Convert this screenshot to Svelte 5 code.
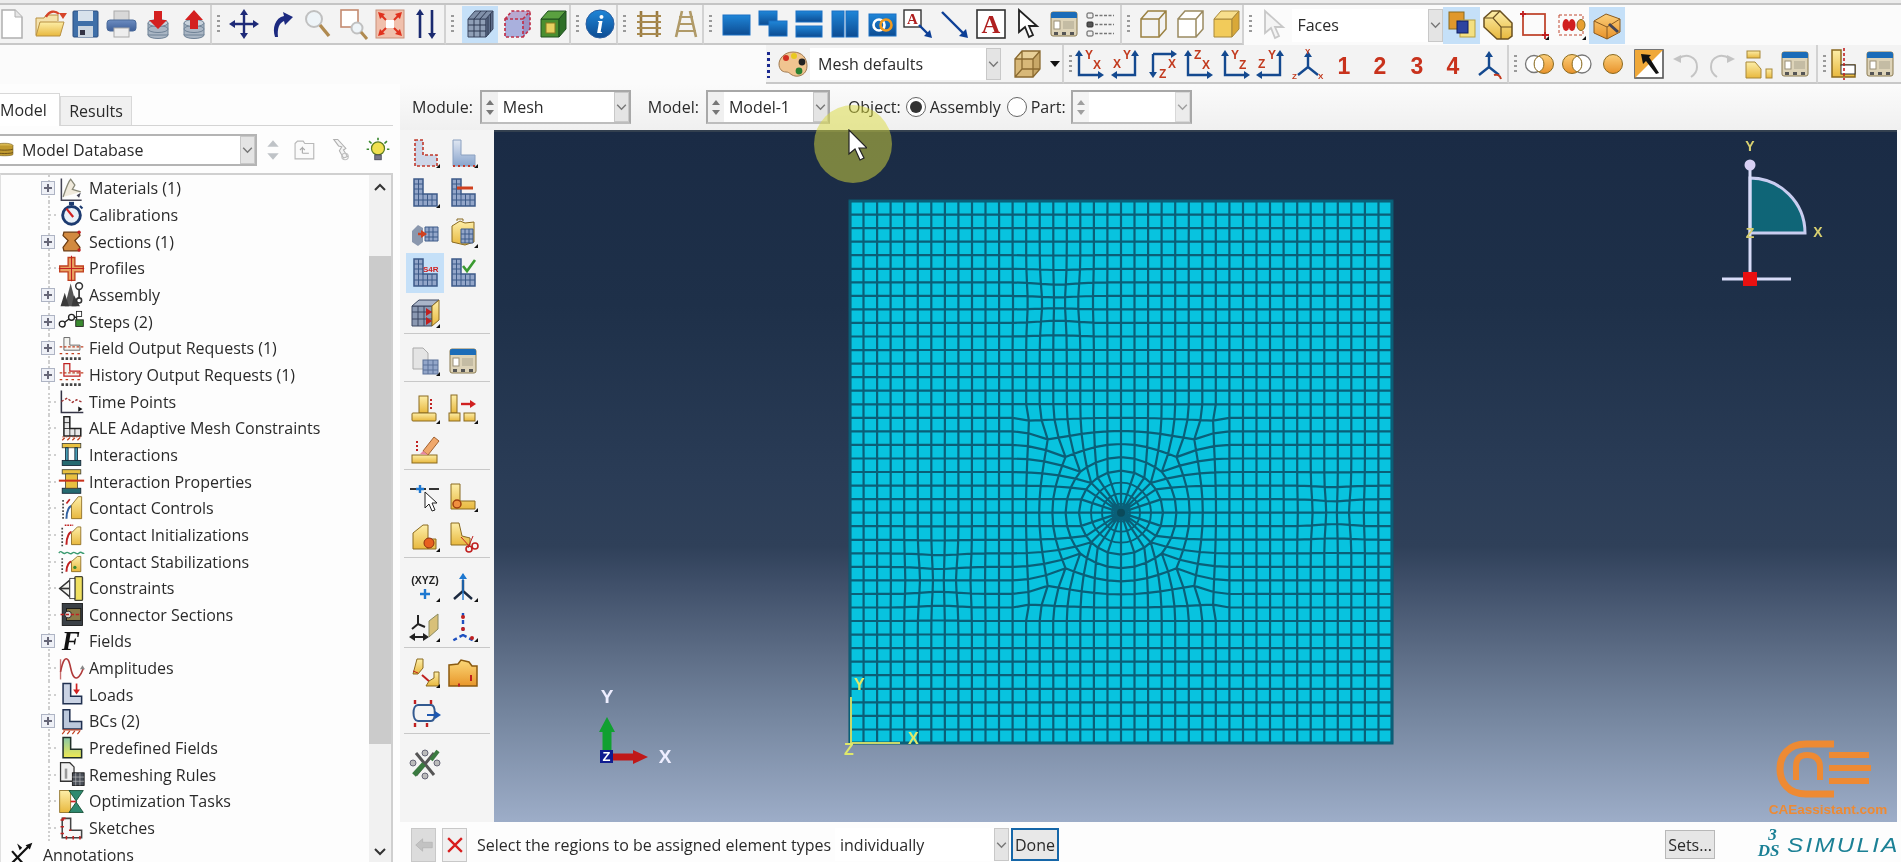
<script>
  const N = 40, x0 = 850, y0 = 201, h = 13.55, ic0 = 20, jc0 = 23;
  const cx = x0 + ic0 * h, cy = y0 + jc0 * h;
  const spots = [[1057, 303, 18, 0.22], [940, 580, 18, 0.22], [1334, 512, 16, 0.24]];
  const R = (k) => (k <= 3 ? 14 * k : 42 + (k - 3) * 13.55);
  const sm = (t) => { t = Math.max(0, Math.min(1, t)); return t * t * (3 - 2 * t); };
  function P(i, j) {
    const dx = i - ic0, dy = j - jc0, k = Math.max(Math.abs(dx), Math.abs(dy));
    let x = x0 + i * h, y = y0 + j * h;
    if (k > 0) {
      const n = Math.hypot(dx, dy), w = 1 - sm((k - 3) / 5);
      x += (cx + (dx / n) * R(k) - x) * w;
      y += (cy + (dy / n) * R(k) - y) * w;
    }
    if (i > 0 && i < N && j > 0 && j < N) {
      for (const [sx, sy, s, a] of spots) {
        const d = Math.hypot(x - sx, y - sy), g = Math.exp(-(d * d) / (2 * s * s));
        x += (sx - x) * a * g; y += (sy - y) * a * g;
      }
    }
    return [x.toFixed(1), y.toFixed(1)];
  }
  function meshPath() {
    let d = '';
    const inner = (i, j) => Math.max(Math.abs(i - ic0), Math.abs(j - jc0)) < 3;
    for (let j = 0; j <= N; j++) for (let i = 0; i < N; i++) {
      if (inner(i, j) || inner(i + 1, j)) continue;
      const a = P(i, j), b = P(i + 1, j);
      d += `M${a[0]} ${a[1]}L${b[0]} ${b[1]}`;
    }
    for (let i = 0; i <= N; i++) for (let j = 0; j < N; j++) {
      if (inner(i, j) || inner(i, j + 1)) continue;
      const a = P(i, j), b = P(i, j + 1);
      d += `M${a[0]} ${a[1]}L${b[0]} ${b[1]}`;
    }
    for (let dy = -3; dy <= 3; dy++) for (let dx = -3; dx <= 3; dx++) {
      if (Math.max(Math.abs(dx), Math.abs(dy)) !== 3) continue;
      const a = P(ic0 + dx, jc0 + dy);
      d += `M${cx} ${cy}L${a[0]} ${a[1]}`;
    }
    return d;
  }
  const mesh = meshPath();
  const rings = [9, 19, 30];

  const cube = (a, b, c, s = '#7a5c20') => `<path d="M4 11h18v18H4z" fill="${a}" stroke="${s}"/><path d="M4 11l7-8h18l-7 8z" fill="${b}" stroke="${s}"/><path d="M22 11l7-8v18l-7 8z" fill="${c}" stroke="${s}"/>`;
  const wire = (s) => `<path d="M4 11h18v18H4zM4 11l7-8h18v18l-7 8M22 11l7-8" fill="none" stroke="${s}" stroke-width="1.5"/>`;
  const fl = `<path d="M27 31l4-4v4z" fill="#111"/>`;
  const L = `M5 2h9v15h14v12H5z`;
  const lmesh = (f = '#93a6c9', s = '#3d5a88') => `<path d="${L}" fill="${f}" stroke="${s}" stroke-width="1.5"/><path d="M9.5 2v27M14 17v12M18.5 17v12M23 17v12M5 7h9M5 12h9M5 17h9M5 23h23" stroke="${s}" stroke-width="1"/>`;
  const lgold = (s = '#8a6a20') => `<path d="${L}" fill="url(#gGold)" stroke="${s}" stroke-width="1.5"/>`;
  const head = (x, y, d, c) => {
    const m = { u: `M${x} ${y}l-4 6h8z`, d: `M${x} ${y}l-4 -6h8z`, r: `M${x} ${y}l-6 -4v8z`, l: `M${x} ${y}l6 -4v8z` };
    return `<path d="${m[d]}" fill="${c}"/>`;
  };
  const t = (x, y, s, c = '#c23a1e', z = 12, w = 700, extra = '') => `<text x="${x}" y="${y}" font-family="Liberation Sans" font-size="${z}" font-weight="${w}" fill="${c}" ${extra}>${s}</text>`;
  const B = '#14498f';
  const ax1 = (v, hh) => `<path d="M6 8v19h20" fill="none" stroke="${B}" stroke-width="2.4"/>` + head(6, 2, 'u', B) + head(31, 27, 'r', B) + t(12, 11, v) + t(20, 21, hh);
  const ax2 = (hh, v) => `<path d="M25 8v19H6" fill="none" stroke="${B}" stroke-width="2.4"/>` + head(25, 2, 'u', B) + head(1, 27, 'l', B) + t(3, 20, hh) + t(13, 11, v);
  const ax3 = `<path d="M7 6h19M7 6v18" fill="none" stroke="${B}" stroke-width="2.4"/>` + head(31, 6, 'r', B) + head(7, 30, 'd', B) + t(22, 20, 'X') + t(13, 30, 'Z');
  const iso = (lab) => `<path d="M16 8v11M16 19l-10 8M16 19l10 8" stroke="${B}" stroke-width="2.4"/>` + head(16, 3, 'u', B) + (lab ? t(13, 6, 'Y', '#c23a1e', 8) + t(0, 31, 'Z', '#c23a1e', 8) + t(26, 31, 'X', '#c23a1e', 8) : `<path d="M21 27c3-1 6 0 7 4" fill="none" stroke="#c23a1e" stroke-width="2"/>`);
  const db = `<g fill="#aab6c4" stroke="#6f8296"><ellipse cx="16" cy="27" rx="10" ry="3.5"/><path d="M6 15v12h20V15" /><ellipse cx="16" cy="21" rx="10" ry="3.5"/><ellipse cx="16" cy="15" rx="10" ry="3.5" fill="#c8d2dc"/></g>`;
  const viewBase = (x, y, w, hh) => `<rect x="${x}" y="${y}" width="${w}" height="${hh}" fill="url(#gBlue)" stroke="#1b70c4"/>`;
  const win = `<rect x="3" y="4" width="26" height="24" rx="2" fill="#ddd3b8" stroke="#8a7a50"/><path d="M3 6q0-2 2-2h22q2 0 2 2v4H3z" fill="#1b6cb8"/><rect x="6" y="13" width="6" height="8" fill="#fff" stroke="#9a9078"/><rect x="15" y="13" width="11" height="8" fill="#c4bca4"/><rect x="6" y="24" width="4" height="3" fill="#555"/><rect x="14" y="24" width="4" height="3" fill="#555"/><rect x="22" y="24" width="4" height="3" fill="#555"/>`;

  const ic = {
    new: `<path d="M6 2h13l7 7v21H6z" fill="#fff" stroke="#b0b0b0" stroke-width="1.5"/><path d="M19 2v7h7" fill="#e6e6e6" stroke="#b0b0b0"/>`,
    open: `<path d="M3 27V10h8l2-3h12v6" fill="#f4e2ac" stroke="#b89040"/><path d="M3 28l4-14h24l-4 14z" fill="url(#gGold)" stroke="#b89040"/><path d="M13 9c3-6 9-7 13-3" fill="none" stroke="#d6442a" stroke-width="2.4"/>` + head(30, 11, 'd', '#d6442a'),
    save: `<rect x="4" y="3" width="25" height="26" rx="1" fill="#3f6fa8" stroke="#2a4f80"/><rect x="9" y="3" width="15" height="10" fill="#d8e2ec"/><rect x="9" y="18" width="15" height="11" fill="#ccd6e0"/><rect x="11" y="22" width="5" height="5" fill="#334"/>`,
    print: `<rect x="9" y="3" width="15" height="10" fill="#d8d8d8" stroke="#aaa"/><rect x="2" y="12" width="29" height="11" rx="3" fill="url(#gBlue2)" stroke="#4a6a9a"/><rect x="9" y="20" width="15" height="9" fill="#eee" stroke="#aaa"/>`,
    dbdown: db + `<path d="M12 3h8v9h5l-9 9-9-9h5z" fill="#d42020"/>`,
    dbup: db + `<path d="M12 21h8v-9h5l-9-10-9 10h5z" fill="#d42020"/>`,
    move: `<path d="M16 5v22M5 16h22" stroke="#1e2a78" stroke-width="2.4"/>` + head(16, 1, 'u', '#1e2a78') + head(16, 31, 'd', '#1e2a78') + head(1, 16, 'l', '#1e2a78') + head(31, 16, 'r', '#1e2a78'),
    rotate: `<path d="M10 29C7 20 10 10 19 8l-1-4 10 5-8 8-1-4c-5 2-7 8-6 16z" fill="#1c2a80"/>`,
    zoom: `<circle cx="13" cy="11" r="8" fill="#eef4f8" stroke="#c0c0c0" stroke-width="2"/><path d="M19 17l9 11" stroke="#b08a50" stroke-width="3.4"/>`,
    boxzoom: `<rect x="4" y="2" width="17" height="17" fill="#fff" stroke="#c48a70" stroke-width="1.6"/><circle cx="20" cy="20" r="5.5" fill="#eef4f8" stroke="#c0c0c0" stroke-width="2"/><path d="M24 24l6 7" stroke="#b08a50" stroke-width="3"/>`,
    fit: `<rect x="2" y="2" width="28" height="28" fill="#f0c0ac" stroke="#c8907a"/><path d="M12 12h8v8h-8z" fill="#fff"/><path d="M4 4l7 2-5 5zM28 4l-2 7-5-5zM4 28l2-7 5 5zM28 28l-7-2 5-5z" fill="#e0321e"/><path d="M6 6l6 6M26 6l-6 6M6 26l6-6M26 26l-6-6" stroke="#e0321e" stroke-width="2"/>`,
    updown: `<path d="M10 7v23M22 2v23" stroke="#1a2a70" stroke-width="2.6"/>` + head(10, 1, 'u', '#1a2a70') + head(22, 31, 'd', '#1a2a70'),
    meshc: `<path d="M4 11h18v18H4z" fill="#8f9fb6" stroke="#3a4660"/><path d="M4 11l7-8h18l-7 8z" fill="#7f8fa8" stroke="#3a4660"/><path d="M22 11l7-8v18l-7 8z" fill="#5e6e8a" stroke="#3a4660"/><path d="M10 11v18M16 11v18M4 17h18M4 23h18M10 11l7-8M16 11l7-8M24 9v18M26.500 6v18" stroke="#2f3a52"/>`,
    dashc: `<path d="M4 11h18v18H4z" fill="#a9b0dd"/><path d="M4 11l7-8h18l-7 8z" fill="#b8a8d0"/><path d="M22 11l7-8v18l-7 8z" fill="#9a92c4"/><path d="M4 11h18v18H4zM4 11l7-8h18v18l-7 8M22 11l7-8" fill="none" stroke="#c0304a" stroke-width="1.7" stroke-dasharray="3 2"/>`,
    greenc: cube('#4a8f30', '#5aa040', '#2f6f28', '#1f4f1f') + `<rect x="9" y="15" width="9" height="10" fill="#e8d060" stroke="#8a7a20"/>`,
    info: `<circle cx="16" cy="16" r="14" fill="url(#gBlue)" stroke="#2a5ea0"/><text x="16" y="25" text-anchor="middle" font-family="Liberation Serif" font-style="italic" font-weight="700" font-size="25" fill="#fff">i</text>`,
    ladder: `<path d="M8 3v26M24 3v26" stroke="#9a7a40" stroke-width="2.6"/><path d="M4 8h24M4 14h24M4 20h24M4 26h24" stroke="#a88a50" stroke-width="2.2"/>`,
    ladder2: `<path d="M12 3L6 29M20 3l6 26" stroke="#b09a68" stroke-width="2.6"/><path d="M9 9h14M8 16h16M6 23h20" stroke="#b09a68" stroke-width="2.2"/>`,
    v1: viewBase(3, 7, 27, 20),
    v2: viewBase(2, 3, 18, 14) + viewBase(12, 13, 18, 15),
    v3: viewBase(3, 3, 26, 11) + viewBase(3, 18, 26, 11),
    v4: viewBase(3, 3, 12, 26) + viewBase(17, 3, 12, 26),
    link: viewBase(3, 6, 27, 22) + `<circle cx="13" cy="17" r="5.500" fill="none" stroke="#fff" stroke-width="2.600"/><circle cx="20" cy="17" r="5.500" fill="none" stroke="#f09a20" stroke-width="2.600"/>`,
    ann1: `<rect x="2" y="2" width="17" height="17" fill="#fff" stroke="#333" stroke-width="1.400"/><text x="10.500" y="16" text-anchor="middle" font-family="Liberation Serif" font-size="15" font-weight="700" fill="#b02020">A</text><path d="M17 17l9 9" stroke="#0c3f96" stroke-width="2.400"/><path d="M30 30l-8-2 6-6z" fill="#0c3f96"/>`,
    ann2: `<path d="M3 4l21 21" stroke="#0c3f96" stroke-width="2.400"/><path d="M29 30l-9-2 7-7z" fill="#0c3f96"/>`,
    ann3: `<rect x="2" y="2" width="28" height="28" fill="#fff" stroke="#333" stroke-width="1.600"/><text x="16" y="25" text-anchor="middle" font-family="Liberation Serif" font-size="26" font-weight="700" fill="#b02020">A</text>`,
    cursor: `<path d="M8 2v22l6-5 4 10 4-2-4-9h8z" fill="#fff" stroke="#222" stroke-width="1.800"/>`,
    cursorg: `<path d="M8 2v22l6-5 4 10 4-2-4-9h8z" fill="#f4f4f4" stroke="#c8c8c8" stroke-width="1.800"/>`,
    dialog: win,
    list: `<rect x="3" y="5" width="6" height="5" rx="1" fill="#f0f0f0" stroke="#555"/><rect x="3" y="14" width="6" height="5" rx="1" fill="#555" stroke="#333"/><rect x="3" y="23" width="6" height="5" rx="1" fill="#f0f0f0" stroke="#555"/><path d="M11 7.500h19M11 16.500h19M11 25.500h19" stroke="#777" stroke-width="1.600" stroke-dasharray="3 1.500"/>`,
    cw: wire('#9a8040'),
    ch: `<path d="M4 11h18v18H4zM4 11l7-8h18v18l-7 8M22 11l7-8" fill="#fff" stroke="#9a8a60" stroke-width="1.500"/>`,
    cs: cube('#f2cb5a', '#f7de8c', '#d9a838', '#a8883a'),
    sel1: `<rect x="3" y="3" width="15" height="17" fill="#e0982c" stroke="#8a6a20"/><rect x="14" y="11" width="15" height="17" fill="#f4e080" stroke="#b8a040"/><rect x="11" y="12" width="11" height="12" fill="#2c44a0" stroke="#0c1c60"/>`,
    sel2: `<path d="M2 9l8-7h8l12 12v13l-4 3H15L2 18z" fill="url(#gGold)" stroke="#6a5020" stroke-width="1.500"/><path d="M2 9h9l8 9h11M11 9l7-7M19 18v12" fill="none" stroke="#6a5020" stroke-width="1.200"/>` ,
    sel3: `<rect x="5" y="5" width="22" height="21" fill="none" stroke="#c04830" stroke-width="1.800"/><path d="M2 5h6M5 2v6M24 26h7M27 23v7" stroke="#c02020" stroke-width="1.800"/>` + fl,
    sel4: `<rect x="4" y="6" width="24" height="20" fill="none" stroke="#c04830" stroke-dasharray="3 2"/><ellipse cx="11" cy="16" rx="3.500" ry="6" fill="#d02020"/><ellipse cx="17" cy="16" rx="3.500" ry="6" fill="#d02020"/><ellipse cx="26" cy="16" rx="4" ry="5.500" fill="#e8a030" stroke="#8a6a20"/>` + fl,
    sel5: `<path d="M3 12l12-7 14 5v13l-13 7-13-6z" fill="url(#gOrange)" stroke="#8a5a20"/><path d="M3 12l13 6 13-8M16 18v12" fill="none" stroke="#8a5a20"/><path d="M18 15l9 8" stroke="#445" stroke-width="3"/>`,
    palette: `<path d="M16 4c9 0 14 6 14 14s-7 11-12 10-5-4-9-4-7-3-7-8S7 4 16 4z" fill="#f0c490" stroke="#a07a50"/><circle cx="9" cy="10" r="3" fill="#d03020"/><circle cx="17" cy="8" r="3" fill="#e8c820"/><circle cx="25" cy="14" r="3.400" fill="#222"/><circle cx="22" cy="23" r="3.400" fill="#288030"/>`,
    ccube: `<path d="M4 11h18v18H4z" fill="#d8b878"/><path d="M4 11l7-8h18l-7 8z" fill="#e8d098"/><path d="M22 11l7-8v18l-7 8z" fill="#c8a868"/><path d="M4 11h18v18H4zM4 11l7-8h18v18l-7 8M22 11l7-8M11 3v18h18M11 21l-7 8" fill="none" stroke="#8a6a30" stroke-width="1.300"/>`,
    a1: ax1('Y', 'X'), a2: ax2('X', 'Y'), a3: ax3, a4: ax1('Z', 'X'), a5: ax1('Y', 'Z'), a6: ax2('Z', 'Y'), a7: iso(true), a8: iso(false),
    n1: t(16, 26, '1', '#c8321c', 23, 700, 'text-anchor="middle"'), n2: t(16, 26, '2', '#c8321c', 23, 700, 'text-anchor="middle"'),
    n3: t(16, 26, '3', '#c8321c', 23, 700, 'text-anchor="middle"'), n4: t(16, 26, '4', '#c8321c', 23, 700, 'text-anchor="middle"'),
    vdA: `<circle cx="10" cy="16" r="8.500" fill="#fff" stroke="#777" stroke-width="1.300"/><circle cx="20" cy="16" r="9.500" fill="url(#gOrange)" stroke="#8a6a20"/><path d="M15 8a9 9 0 0 0 0 16a9 9 0 0 0 0-16" fill="#fff" stroke="#8a6a20"/>`,
    vdB: `<circle cx="21" cy="16" r="9" fill="#fff" stroke="#777" stroke-width="1.300"/><circle cx="11" cy="16" r="9.500" fill="url(#gOrange)" stroke="#8a6a20"/><path d="M16 8a9 9 0 0 1 0 16a9 9 0 0 1 0-16" fill="#fff" stroke="#8a6a20"/>`,
    vdC: `<circle cx="16" cy="16" r="9.500" fill="url(#gOrange)" stroke="#8a6a20"/>`,
    pick: `<rect x="2" y="2" width="28" height="28" fill="#fff" stroke="#555" stroke-width="1.600"/><path d="M2 2h28L2 30z" fill="#f0a838"/><path d="M8 6l10 1-2 2 10 16-3 1-10-13-3 3z" fill="#111"/>`,
    undo: `<path d="M8 11c8-6 19-3 19 8 0 5-3 8-6 10" fill="none" stroke="#c4c4c4" stroke-width="2"/><path d="M3 11l8-4v8z" fill="#c4c4c4"/>`,
    redo: `<path d="M24 11c-8-6-19-3-19 8 0 5 3 8 6 10" fill="none" stroke="#c4c4c4" stroke-width="2"/><path d="M29 11l-8-4v8z" fill="#c4c4c4"/>`,
    part: `<rect x="4" y="3" width="13" height="7" fill="url(#gGold)" stroke="#a88838"/><path d="M3 14h9l6 7v9H3z" fill="url(#gGold)" stroke="#a88838"/><rect x="23" y="21" width="6" height="9" fill="url(#gGold)" stroke="#a88838"/>`,
    win,
    split: lgold() + `<rect x="14" y="17" width="14" height="9" fill="#fff" stroke="#333"/><path d="M17 0v32" stroke="#c02020" stroke-dasharray="3 2" stroke-width="1.600"/>`,

    t1: `<path d="M6 3h8v15h14v11H6z" fill="#cdd6e8" stroke="#c0392b" stroke-dasharray="3 2" stroke-width="1.600"/>` + fl,
    t2: `<path d="M6 3h8v15h14v11H6z" fill="url(#gBlue3)" stroke="#8aa0c0"/><path d="M6 29h22" stroke="#c0392b" stroke-dasharray="2 3" stroke-width="2"/>` + fl,
    t3: lmesh() + fl,
    t4: lmesh() + `<path d="M10 11h16" stroke="#d0401e" stroke-width="3"/>`,
    t5: `<path d="M3 14l6-6 5 3v14l-5 4-6-4z" fill="#8a97ad"/><path d="M16 10h13v14H16z" fill="#93a6c9" stroke="#3d5a88"/><path d="M20 10v14M24 10v14M16 15h13M16 20h13" stroke="#3d5a88"/><path d="M9 17h6" stroke="#d0401e" stroke-width="2.500"/>` + head(18, 17, 'r', '#d0401e'),
    t6: `<path d="M5 9l8-5 5 2 9-1v20l-9 3-13-3z" fill="url(#gGold)" stroke="#8a6a20"/><path d="M14 12h12v14H14z" fill="#93a6c9" stroke="#3d5a88"/><path d="M18 12v14M22 12v14M14 17h12M14 22h12" stroke="#3d5a88"/><path d="M10 4v-2h6v2" fill="none" stroke="#8a6a20"/>` + fl,
    t7: lmesh() + t(14, 15, 'S4R', '#d02020', 8),
    t8: lmesh() + `<path d="M16 9l4 5 8-11" fill="none" stroke="#3a9a30" stroke-width="2.600"/>`,
    t9: `<path d="M3 9h20v20H3z" fill="#8b99b2" stroke="#3a4660"/><path d="M3 9l7-6h20L23 9z" fill="#a9b4c8" stroke="#3a4660"/><path d="M23 9l7-6v20l-7 6z" fill="url(#gGold)" stroke="#8a6a20"/><path d="M3 15h20M3 22h20M9 9v20M15 9v20" stroke="#3a4660"/>` + head(23, 15, 'r', '#c02020') + head(23, 24, 'r', '#c02020') + fl,
    t10: `<path d="M4 3h10l5 5v16H4z" fill="#e4e4e4" stroke="#aaa"/><rect x="14" y="15" width="15" height="14" fill="#93a6c9" stroke="#5a7098"/><path d="M19 15v14M24 15v14M14 20h15M14 25h15" stroke="#5a7098"/>` + fl,
    t12: `<rect x="10" y="3" width="9" height="17" fill="url(#gGold)" stroke="#8a6a20"/><rect x="3" y="20" width="24" height="8" rx="1" fill="url(#gGold)" stroke="#8a6a20"/><path d="M22 6v12" stroke="#c02020" stroke-dasharray="2 2" stroke-width="2"/>` + fl,
    t13: `<rect x="4" y="2" width="6" height="18" fill="url(#gGold)" stroke="#8a6a20"/><rect x="2" y="20" width="11" height="8" fill="url(#gGold)" stroke="#8a6a20"/><rect x="17" y="20" width="11" height="8" fill="url(#gGold)" stroke="#8a6a20"/><path d="M14 11h9" stroke="#d02020" stroke-width="2.400"/>` + head(29, 11, 'r', '#d02020') + fl,
    t14: `<rect x="3" y="22" width="25" height="8" fill="url(#gGold)" stroke="#8a6a20"/><path d="M14 18l11-14 5 4-11 14z" fill="#f0a86c" stroke="#a06030"/><path d="M14 18l5 4-8-1z" fill="#e888a0"/><path d="M8 8v12" stroke="#c02020" stroke-dasharray="2 2" stroke-width="2"/>`,
    t15: `<path d="M1 8h8M13 8h4M20 8h10" stroke="#333" stroke-width="2"/><path d="M11 4v8M7 8h8" stroke="#1e78d0" stroke-width="2.400"/><path d="M16 11v16l4-4 3 7 3-1-3-7h5z" fill="#fff" stroke="#222"/>`,
    t16: `<path d="M4 3h9v17h15v8H4z" fill="url(#gGold)" stroke="#8a6a20"/><circle cx="10" cy="23" r="4" fill="#f09040" stroke="#a04010" stroke-width="1.500"/>` + fl,
    t17: `<path d="M4 12l10-8h5v24H4z" fill="url(#gGold)" stroke="#8a6a20"/><path d="M19 18h8v10h-8z" fill="#e8c050" stroke="#8a6a20"/><circle cx="20" cy="22" r="5" fill="#e86020" stroke="#903010"/>` + fl,
    t18: `<path d="M4 2h8l3 13 8 2v7H4z" fill="url(#gGold)" stroke="#8a6a20"/><circle cx="22" cy="28" r="3" fill="none" stroke="#c02020" stroke-width="1.600"/><circle cx="28" cy="25" r="3" fill="none" stroke="#c02020" stroke-width="1.600"/><path d="M14 16l9 10M26 15l-5 12" stroke="#c02020"/>`,
    t19: t(16, 13, '(XYZ)', '#222', 10.500, 700, 'text-anchor="middle"') + `<path d="M16 18v10M11 23h10" stroke="#1e78d0" stroke-width="2.400"/>` + fl,
    t20: `<path d="M16 9v11M16 20l-9 8M16 20l9 8" stroke="#1c2a40" stroke-width="2.400"/>` + head(16, 2, 'u', '#1e78d0') + `<path d="M16 3v26" stroke="#1e78d0" stroke-width="1.400"/>` + fl,
    t21: `<path d="M9 4v9M9 13l-6 5M9 13l7 3" stroke="#222" stroke-width="2"/><path d="M2 26h16" stroke="#222" stroke-width="2"/>` + head(0, 26, 'l', '#222') + head(20, 26, 'r', '#222') + `<path d="M20 10l9-7v15l-9 8z" fill="#d8c078" stroke="#8a8a60"/>` + fl,
    t22: `<path d="M16 2v22M16 24l-11 6M16 24l11 6" stroke="#1e50c0" stroke-dasharray="4 3" stroke-width="2.400"/><circle cx="16" cy="6" r="2" fill="#c02020"/><circle cx="16" cy="18" r="2" fill="#c02020"/><circle cx="25" cy="27" r="2" fill="#c02020"/>` + fl,
    t23: `<path d="M8 2h6v9l-5 6H4z" fill="url(#gGold)" stroke="#8a6a20"/><path d="M4 14l5 2" stroke="#c02020"/><path d="M13 18l8 7" stroke="#c02020" stroke-width="2"/><path d="M25 15h5v14H17l3-5 5-3z" fill="url(#gGold)" stroke="#8a6a20"/>` + fl,
    t24: `<path d="M2 8l9-1 3-4 8 2 3 4h5v20H2z" fill="url(#gGold2)" stroke="#8a5a10" stroke-width="1.500"/><path d="M24 18v6" stroke="#c02020" stroke-width="2"/><path d="M11 28h2" stroke="#c02020" stroke-width="3"/>`,
    t25: `<path d="M9 8h13c5 0 5 16 0 16H9C3 24 3 8 9 8z" fill="none" stroke="#335a90" stroke-width="2"/><path d="M6 3v4M22 3v4M6 26v4M18 26v4" stroke="#c02020" stroke-width="2.400"/><path d="M18 18h8" stroke="#1e58b0" stroke-width="2"/>` + head(32, 18, 'r', '#1e58b0'),
    t26: `<path d="M7 5l18 22M25 5L7 27" stroke="#555" stroke-width="3"/><path d="M22 12l7-9" stroke="#3a7a40" stroke-width="4"/><path d="M5 27l10-11" stroke="#3a7a40" stroke-width="5"/><circle cx="4" cy="15" r="3" fill="#bbb" stroke="#667"/><circle cx="28" cy="15" r="3" fill="#bbb" stroke="#667"/><circle cx="16" cy="5" r="3" fill="#bbb" stroke="#667"/><circle cx="16" cy="28" r="3" fill="#bbb" stroke="#667"/>`,

    materials: `<path d="M4 4v26h24" fill="none" stroke="#445" stroke-width="1.800"/><path d="M6 26C10 14 12 8 15 5l5 7-3 5 10 3" fill="#f0eadc" stroke="#887" stroke-width="1.500"/><path d="M22 24l5-3-2 6" fill="#445"/>`,
    calibrations: `<circle cx="16" cy="17" r="10.500" fill="#e8f0f8" stroke="#1c3a70" stroke-width="3.400"/><path d="M10 9l8 10" stroke="#d02020" stroke-width="2.600"/><rect x="13" y="1" width="6" height="4" fill="#1c3a70"/><path d="M26 6l3 3" stroke="#1c3a70" stroke-width="2.500"/>`,
    sections: `<path d="M7 5h18l1 4-6 6 6 8-1 4H7l-1-4 6-8-6-6z" fill="#d28a40" stroke="#6a3a10" stroke-width="1.500"/><circle cx="25" cy="5" r="2" fill="#c02020"/><circle cx="25" cy="26" r="2" fill="#c02020"/>`,
    profiles: `<path d="M12 3h8v10h10v7H20v10h-8V20H2v-7h10z" fill="#e8a060" stroke="#c04020" stroke-width="1.600"/><path d="M16 1v30M1 16h30" stroke="#c02020" stroke-width="1.200"/>`,
    assembly: `<path d="M15 3l-7 27h14z" fill="#555"/><path d="M8 14l-5 16h10zM19 17l-3 13h10z" fill="#3a3a3a"/><circle cx="25" cy="6" r="4" fill="#fff" stroke="#333" stroke-width="1.800"/><path d="M25 10v10" stroke="#333" stroke-width="2"/><circle cx="25" cy="23" r="3" fill="#fff" stroke="#333" stroke-width="1.800"/>`,
    steps: `<circle cx="5" cy="19" r="3.500" fill="#fff" stroke="#222" stroke-width="1.600"/><circle cx="16" cy="11" r="3.500" fill="#fff" stroke="#222" stroke-width="1.600"/><rect x="21" y="14" width="9" height="8" fill="#3a8a30" stroke="#222"/><path d="M8 17l5-4M19 11h3v3" stroke="#222" stroke-width="1.600" fill="none"/><rect x="22" y="4" width="6" height="6" fill="#fff" stroke="#222"/>`,
    field: `<path d="M7 3h7v9h12v6H7z" fill="#f4f4f0" stroke="#555"/><path d="M2 14h28M2 22h4M9 22h4M16 22h4M23 22h4" stroke="#c04020" stroke-width="1.600" stroke-dasharray="3 2"/><path d="M4 28h24" stroke="#444" stroke-width="3" stroke-dasharray="3 2"/>`,
    history: `<path d="M7 3h7v9h12v6H7z" fill="#f4f4f0" stroke="#c02020" stroke-width="1.500"/><path d="M2 14h28M2 22h4M9 22h4M16 22h4M23 22h4" stroke="#c04020" stroke-width="1.600" stroke-dasharray="3 2"/><path d="M4 28h24" stroke="#444" stroke-width="3" stroke-dasharray="3 2"/>`,
    timep: `<path d="M4 3v26h26" fill="none" stroke="#334" stroke-width="1.800"/><path d="M4 16l7-4 6 5 5-3 7 3" fill="none" stroke="#a03030" stroke-width="1.600" stroke-dasharray="3 2"/><path d="M24 22l5 3-5 3z" fill="#111"/>`,
    ale: `<path d="M7 2h7v14h13v9H7z" fill="#e8e8e8" stroke="#222" stroke-width="1.800"/><path d="M7 9h7M7 16h7M14 16v9M20 16v9" stroke="#222"/><path d="M5 30l3-3M11 30l3-3M17 30l3-3M23 30l3-3" stroke="#c04020" stroke-width="1.500"/><path d="M5 26h24" stroke="#c04020" stroke-dasharray="2 2"/>`,
    inter: `<rect x="5" y="3" width="22" height="5" fill="#e8c040" stroke="#443"/><rect x="9" y="8" width="3" height="15" fill="#48a0b8" stroke="#123"/><rect x="20" y="8" width="3" height="15" fill="#48a0b8" stroke="#123"/><rect x="5" y="23" width="22" height="6" fill="#266a70" stroke="#123"/>`,
    interp: `<rect x="5" y="2" width="22" height="5" fill="#e8c040" stroke="#443"/><rect x="5" y="24" width="22" height="6" fill="#266a70" stroke="#123"/><rect x="9" y="7" width="14" height="17" fill="#e8c040" stroke="#443"/><path d="M1 15h30" stroke="#c8321c" stroke-width="2.400"/>`,
    ctrl: `<path d="M6 6v24" stroke="#444" stroke-width="2" stroke-dasharray="2 2"/><path d="M10 28c0-10 4-15 6-15" fill="none" stroke="#3060a0" stroke-width="2.400"/><path d="M16 28V12l8-10h4v26z" fill="url(#gGold)" stroke="#8a6a20"/><path d="M10 10l4-5" stroke="#c02020" stroke-width="2"/>`,
    cinit: `<path d="M5 8v22" stroke="#444" stroke-width="2" stroke-dasharray="2 2"/><path d="M10 28c0-10 4-15 6-15" fill="none" stroke="#c02020" stroke-width="2.400"/><path d="M16 28V14l7-7h4v21z" fill="url(#gGold)" stroke="#8a6a20"/><path d="M8 5h10" stroke="#c02020" stroke-width="1.600" stroke-dasharray="2 1"/>`,
    cstab: `<path d="M1 6c3-5 5 3 8 0s5 3 8 0 5 3 8 0 4 2 6 0" fill="none" stroke="#3a9a70" stroke-width="1.600"/><path d="M5 12v18" stroke="#444" stroke-width="2" stroke-dasharray="2 2"/><path d="M10 28c0-8 4-12 6-12" fill="none" stroke="#c02020" stroke-width="2.400"/><path d="M16 28V16l7-6h4v18z" fill="url(#gGold)" stroke="#8a6a20"/><circle cx="20" cy="23" r="2" fill="#3a8a30"/>`,
    constr: `<path d="M2 16L14 6v20z" fill="#f4f4f0" stroke="#333" stroke-width="1.800"/><path d="M14 16H2" stroke="#333" stroke-width="2"/><rect x="20" y="2" width="9" height="28" rx="1" fill="#f0e060" stroke="#443" stroke-width="1.600"/><rect x="14" y="4" width="6" height="24" fill="#fff" stroke="#333"/>`,
    conn: `<rect x="5" y="3" width="24" height="26" fill="#3a4046" stroke="#111"/><rect x="10" y="9" width="17" height="14" fill="#8a7a48" stroke="#111"/><circle cx="12" cy="16" r="4" fill="#ddd" stroke="#111"/><path d="M3 16h23" stroke="#c02020" stroke-width="1.800" stroke-dasharray="4 2"/>`,
    fields: `<text x="15" y="26" text-anchor="middle" font-family="Liberation Serif" font-style="italic" font-weight="700" font-size="32" fill="#111">F</text>`,
    ampl: `<path d="M3 29V5" stroke="#c87070" stroke-width="1.600"/><path d="M3 20C6 5 9 2 12 6s3 16 7 20 8-2 11-10" fill="none" stroke="#b03a3a" stroke-width="1.900"/><path d="M29 12l-3 5h6z" fill="#888"/>`,
    loads: `<path d="M6 3h9v15h13v9H6z" fill="#cad3e4" stroke="#203050" stroke-width="1.800"/><path d="M22 3v10" stroke="#d02020" stroke-width="2"/>` + head(22, 16, 'd', '#d02020'),
    bcs: `<path d="M6 2h8v14h14v9H6z" fill="#bcc8dc" stroke="#203050" stroke-width="1.800"/><path d="M6 26h21" stroke="#c04020" stroke-width="1.400"/><path d="M5 31l3-4M11 31l3-4M17 31l3-4M23 31l3-4" stroke="#c04020" stroke-width="1.400"/>`,
    predef: `<path d="M6 3h9v14h13v10H6z" fill="url(#gGY)" stroke="#203028" stroke-width="1.800"/>`,
    remesh: `<path d="M3 2h11l5 5v17H3z" fill="#f0f0f0" stroke="#333" stroke-width="1.500"/><rect x="8" y="9" width="3" height="12" fill="#999"/><rect x="17" y="14" width="14" height="15" fill="#4a4f58" stroke="#111"/><path d="M21 14v15M26 14v15M17 19h14M17 24h14" stroke="#ccc" stroke-width=".7"/>`,
    optim: `<rect x="2" y="3" width="13" height="26" fill="url(#gGold)" stroke="#8a6a20"/><path d="M13 3h17l-9 13 9 13H13l9-13z" fill="#2f8a70" stroke="#0f4a30"/><path d="M15 16h6" stroke="#d02020" stroke-width="2"/>`,
    sketches: `<path d="M5 4h10v14h13v9H5z" fill="#f8f8f8" stroke="#444" stroke-width="1.800"/><path d="M3 6h4M3 14h4M3 22h4M10 29v-4M18 29v-4M26 29v-4M5 4h4M13 18h3" fill="none" stroke="#c02020" stroke-width="1.800"/>`,
    annot: `<path d="M2 30L26 6M6 12l14 16" stroke="#111" stroke-width="2.600"/><path d="M30 2l-8 3 5 5z" fill="#111"/><path d="M12 3l6 5-3 3z" fill="#111"/>`,
    dbstack: `<ellipse cx="8" cy="8" rx="15" ry="4" fill="#d8b850" stroke="#6a5010"/><path d="M-7 8v16c0 3 30 3 30 0V8" fill="#c09a30" stroke="#6a5010"/><path d="M-7 14c0 3 30 3 30 0M-7 20c0 3 30 3 30 0" fill="none" stroke="#5a4010" stroke-width="1.400"/>`,
    updownG: `<path d="M9 12l7-8 7 8z" fill="#bfc3c7"/><path d="M9 20l7 8 7-8z" fill="#bfc3c7"/>`,
    folderUp: `<path d="M5 8l3-3h7l2 3h11v19H5z" fill="#fafafa" stroke="#b8b8b8" stroke-width="1.400"/><path d="M14 20h8M14 20v-7l-3 3M14 13l3 3" fill="none" stroke="#aaa" stroke-width="1.400"/>`,
    filter: `<path d="M7 3l6 8 4 1-3 5 5 9 5-2-5-8 3-2-10-11z" fill="#f4f4f4" stroke="#b0b0b0" stroke-width="1.300"/><circle cx="21" cy="24" r="4" fill="none" stroke="#c0c0c0" stroke-width="1.400"/>`,
    bulb: `<circle cx="16" cy="14" r="8" fill="#f0e050" stroke="#5a7a20" stroke-width="1.500"/><rect x="12" y="22" width="8" height="6" fill="#778" stroke="#445"/><path d="M16 1v3M5 5l3 3M27 5l-3 3M2 15h3M27 15h3" stroke="#3a8a30" stroke-width="2"/>`,
    back: `<path d="M4 16l10-9v5h14v8H14v5z" fill="#c2c2c2" stroke="#b0b0b0"/>`,
    red: `<path d="M6 6l20 20M26 6L6 26" stroke="#d81e1e" stroke-width="3.400"/>`,
  };

  const row1 = [
    { lead: 0, b: ['new', 'open', 'save', 'print', 'dbdown', 'dbup'], w: 218, first: true },
    { lead: 14, b: ['move', 'rotate', 'zoom', 'boxzoom', 'fit', 'updown'], w: 234 },
    { lead: 16, b: ['meshc', 'dashc', 'greenc'], w: 125, hi: ['meshc'] },
    { lead: 11, b: ['info'], w: 47 },
    { lead: 13, b: ['ladder', 'ladder2'], w: 86 },
    { lead: 14, b: ['v1', 'v2', 'v3', 'v4', 'link', 'ann1', 'ann2', 'ann3', 'cursor', 'dialog', 'list'], w: 418 },
    { lead: 13, b: ['cw', 'ch', 'cs'], w: 122 },
  ];
  const tree = [
    ['Materials (1)', 'materials', 1], ['Calibrations', 'calibrations'], ['Sections (1)', 'sections', 1], ['Profiles', 'profiles'],
    ['Assembly', 'assembly', 1], ['Steps (2)', 'steps', 1], ['Field Output Requests (1)', 'field', 1], ['History Output Requests (1)', 'history', 1],
    ['Time Points', 'timep'], ['ALE Adaptive Mesh Constraints', 'ale'], ['Interactions', 'inter'], ['Interaction Properties', 'interp'],
    ['Contact Controls', 'ctrl'], ['Contact Initializations', 'cinit'], ['Contact Stabilizations', 'cstab'], ['Constraints', 'constr'],
    ['Connector Sections', 'conn'], ['Fields', 'fields', 1], ['Amplitudes', 'ampl'], ['Loads', 'loads'], ['BCs (2)', 'bcs', 1],
    ['Predefined Fields', 'predef'], ['Remeshing Rules', 'remesh'], ['Optimization Tasks', 'optim'], ['Sketches', 'sketches'],
  ];
  const tools = [
    ['t1', 't2', 't3', 't4', 't5', 't6', 't7', 't8', 't9', ''],
    ['t10', 'win'],
    ['t12', 't13', 't14', ''],
    ['t15', 't16', 't17', 't18'],
    ['t19', 't20', 't21', 't22'],
    ['t23', 't24', 't25', ''],
    ['t26', ''],
  ];
</script>

{#snippet svg(name)}
  <svg viewBox="0 0 32 32" class="ico" aria-hidden="true">{@html ic[name]}</svg>
{/snippet}

{#snippet btn(name, hi = false)}
  <span class="btn" class:hi>{@render svg(name)}</span>
{/snippet}

{#snippet grip()}
  <span class="grip"></span>
{/snippet}

{#snippet combo(text, cls, spin = false)}
  <span class="combo {cls}">
    {#if spin}<span class="spin"><i class="up"></i><i class="dn"></i></span>{/if}
    <span class="ctext">{text}</span>
    <span class="chev"><svg viewBox="0 0 12 12"><path d="M2 4l4 4 4-4" fill="none" stroke="#777" stroke-width="1.300"/></svg></span>
  </span>
{/snippet}

<svg class="defs" width="0" height="0" aria-hidden="true">
  <defs>
    <linearGradient id="gBlue" x1="0" y1="0" x2="0" y2="1"><stop offset="0" stop-color="#1f86d8"/><stop offset="1" stop-color="#0d4c92"/></linearGradient>
    <linearGradient id="gBlue2" x1="0" y1="0" x2="0" y2="1"><stop offset="0" stop-color="#6c8cc0"/><stop offset="1" stop-color="#3e5f98"/></linearGradient>
    <linearGradient id="gBlue3" x1="0" y1="0" x2="0" y2="1"><stop offset="0" stop-color="#dfe6f2"/><stop offset="1" stop-color="#88a4cc"/></linearGradient>
    <linearGradient id="gGold" x1="0" y1="0" x2="0" y2="1"><stop offset="0" stop-color="#fdeea8"/><stop offset="1" stop-color="#e8b83e"/></linearGradient>
    <linearGradient id="gGold2" x1="0" y1="0" x2="0" y2="1"><stop offset="0" stop-color="#fbd778"/><stop offset="1" stop-color="#e8962a"/></linearGradient>
    <linearGradient id="gOrange" x1="0" y1="0" x2="0" y2="1"><stop offset="0" stop-color="#fbcf7a"/><stop offset="1" stop-color="#e8922a"/></linearGradient>
    <linearGradient id="gGY" x1="0" y1="0" x2="0" y2="1"><stop offset="0" stop-color="#88c8a8"/><stop offset="1" stop-color="#f0ea50"/></linearGradient>
  </defs>
</svg>

<div class="app">
  <div class="topline"></div>

  <div class="tbrow one">
    {#each row1 as g}
      <div class="group" class:first={g.first} style="width:{g.w}px;padding-left:{g.lead}px">
        {#if g.lead}{@render grip()}{/if}
        {#each g.b as b}{@render btn(b, g.hi?.includes(b))}{/each}
      </div>
    {/each}
    <div class="group last">
      {@render grip()}
      {@render btn('cursorg')}
      {@render combo('Faces', 'faces')}
      {@render btn('sel1', true)}
      {@render btn('sel2')}
      {@render btn('sel3')}
      {@render btn('sel4')}
      {@render btn('sel5', true)}
    </div>
  </div>

  <div class="tbrow two">
    <div class="group g-style">
      <span class="grip dotted"></span>
      <span class="btn narrow">{@render svg('palette')}</span>
      {@render combo('Mesh defaults', 'meshdef')}
      <span class="btn cubebtn">{@render svg('ccube')}</span>
      <span class="caret"></span>
    </div>
    <div class="group g-axes">
      {@render grip()}
      {#each ['a1', 'a2', 'a3', 'a4', 'a5', 'a6', 'a7', 'n1', 'n2', 'n3', 'n4', 'a8'] as b}{@render btn(b)}{/each}
    </div>
    <div class="group g-vis">
      {@render grip()}
      {#each ['vdA', 'vdB', 'vdC', 'pick', 'undo', 'redo', 'part', 'win'] as b}{@render btn(b)}{/each}
    </div>
    <div class="group g-end">
      {@render grip()}
      {@render btn('split')}
      {@render btn('win')}
    </div>
  </div>

  <div class="body">
    <aside class="left">
      <div class="tabs">
        <span class="tab active">Model</span>
        <span class="tab">Results</span>
      </div>
      <div class="dbrow">
        <span class="combo dbcombo">
          <svg viewBox="0 0 32 32" class="dbico">{@html ic.dbstack}</svg>
          <span class="ctext">Model Database</span>
          <span class="chev"><svg viewBox="0 0 12 12"><path d="M2 4l4 4 4-4" fill="none" stroke="#777" stroke-width="1.300"/></svg></span>
        </span>
        <span class="dbtool d1">{@render svg('updownG')}</span>
        <span class="dbtool d2">{@render svg('folderUp')}</span>
        <span class="dbtool d3">{@render svg('filter')}</span>
        <span class="dbtool d4">{@render svg('bulb')}</span>
      </div>
      <div class="treebox">
        <ul class="tree">
          {#each tree as [label, icon, plus]}
            <li class="node">
              <span class="exp">{#if plus}<b class="plus"></b>{:else}<b class="tick"></b>{/if}</span>
              <svg viewBox="0 0 32 32" class="tico">{@html ic[icon]}</svg>
              <span class="lbl">{label}</span>
            </li>
          {/each}
          <li class="node top">
            <svg viewBox="0 0 32 32" class="tico">{@html ic.annot}</svg>
            <span class="lbl">Annotations</span>
          </li>
        </ul>
        <div class="scroll">
          <div class="cap"><svg viewBox="0 0 14 14"><path d="M2 9l5-5 5 5" fill="none" stroke="#333" stroke-width="2"/></svg></div>
          <div class="thumb"></div>
          <div class="cap end"><svg viewBox="0 0 14 14"><path d="M2 5l5 5 5-5" fill="none" stroke="#333" stroke-width="2"/></svg></div>
        </div>
      </div>
    </aside>

    <main class="right">
      <div class="modbar">
        <span class="lab">Module:</span>
        {@render combo('Mesh', 'c-module', true)}
        <span class="lab m1">Model:</span>
        {@render combo('Model-1', 'c-model', true)}
        <span class="lab m2">Object:</span>
        <span class="radio on"></span>
        <span class="lab">Assembly</span>
        <span class="radio"></span>
        <span class="lab">Part:</span>
        {@render combo('', 'c-part', true)}
      </div>

      <div class="center">
        <div class="toolbox">
          {#each tools as grp}
            <div class="tgroup">
              {#each grp as name}
                <span class="tcell" class:hi={name === 't7'}>{#if name}{@render svg(name)}{/if}</span>
              {/each}
            </div>
          {/each}
        </div>
        <div class="viewport">
          <svg class="canvas" viewBox="494 130 1403 692" aria-hidden="true">
            <rect x={x0} y={y0} width={N * h} height={N * h} fill="#08c3df" stroke="#0a5a70" stroke-width="3"/>
            <path d={mesh} fill="none" stroke="#0a5f78" stroke-width="2.200"/>
            {#each rings as r}
              <circle cx={cx} cy={cy} r={r} fill="none" stroke="#0a5f78" stroke-width="1.900"/>
            {/each}
            <circle cx={cx} cy={cy} r="4" fill="#0b4a5a"/>

            <path d="M851 697V743H900" fill="none" stroke="#c8d86a" stroke-width="2"/>
            <text x="854" y="690" class="tri">Y</text>
            <text x="908" y="744" class="tri">X</text>
            <text x="844" y="755" class="tri">Z</text>

            <path d="M1750 233V178A55 55 0 0 1 1805 233Z" fill="#0f6577" stroke="#c9cdf0" stroke-width="3"/>
            <path d="M1750 170V279M1722 279H1791" stroke="#d8dcf8" stroke-width="3"/>
            <circle cx="1750" cy="165" r="5.500" fill="#d8d0f4"/>
            <rect x="1743" y="272" width="14" height="14" fill="#e81010"/>
            <text x="1750" y="151" class="tri2" text-anchor="middle">Y</text>
            <text x="1750" y="238" class="tri2" text-anchor="middle">Z</text>
            <text x="1818" y="237" class="tri2" text-anchor="middle">X</text>

            <path d="M607 752V732" stroke="#10a030" stroke-width="9"/>
            <path d="M607 717l-8 15h16z" fill="#10a030"/>
            <path d="M612 757H634" stroke="#c01818" stroke-width="7"/>
            <path d="M648 757l-15-7v14z" fill="#c01818"/>
            <rect x="600" y="750" width="13" height="13" fill="#101c90"/>
            <text x="606.500" y="761" class="zaxis" text-anchor="middle">Z</text>
            <text x="607" y="703" class="gaxis" text-anchor="middle">Y</text>
            <text x="665" y="763" class="gaxis" text-anchor="middle">X</text>

            <path d="M1834 744H1806C1788 744 1780 756 1780 769C1780 782 1788 794 1806 794H1834" fill="none" stroke="#ee8a33" stroke-width="7"/>
            <path d="M1796 780V767C1796 758 1800 755 1807 755C1814 755 1820 758 1820 767V780" fill="none" stroke="#ee8a33" stroke-width="6"/>
            <path d="M1829 755H1869M1829 768H1871M1829 781H1869" stroke="#ee8a33" stroke-width="6"/>
            <text x="1828" y="814" class="wm" text-anchor="middle">CAEassistant.com</text>
          </svg>
        </div>
      </div>

      <div class="prompt">
        <span class="pbtn grey">{@render svg('back')}</span>
        <span class="pbtn">{@render svg('red')}</span>
        <span class="ptext">Select the regions to be assigned element types</span>
        {@render combo('individually', 'c-ind')}
        <span class="done">Done</span>
        <span class="sets">Sets...</span>
        <span class="simulia">
          <span class="ds"><em>3</em><span>DS</span></span>
          <span class="simtxt">SIMULIA</span>
        </span>
      </div>
    </main>
  </div>

  <div class="pointer" aria-hidden="true">
    <svg viewBox="0 0 20 32"><path d="M2 1v24l6-5 5 11 4-2-5-10h8z" fill="#fff" stroke="#222" stroke-width="1.200"/></svg>
  </div>
</div>

<style>
  :global(body) { margin: 0; background: #f5f5f5; }
  .defs { position: absolute; }
  .app {
    width: 1901px; height: 862px; overflow: hidden; position: relative;
    display: flex; flex-direction: column; background: #fbfbfb;
    font-family: "Open Sans", "Noto Sans", sans-serif; font-size: 16px; color: #2a2a2a;
    filter: blur(0.55px);
  }
  .topline { height: 5px; flex: none; background: #ececec; border-bottom: 2px solid #c4c4c4; box-sizing: border-box; }
  .tbrow { display: flex; flex: none; height: 39px; align-items: stretch; }
  .tbrow.one { height: 40px; margin-left: -6px; }
  .group { display: flex; align-items: center; box-sizing: border-box; position: relative; flex: none;
    border-right: 2px solid #d2d2d2; border-bottom: 2px solid #c8c8c8; background: #f3f3f3; }
  .group.last { border: none; background: none; padding-left: 11px; }
  .grip { position: absolute; left: 5px; top: 10px; height: 20px; width: 3px;
    background: repeating-linear-gradient(to bottom, #9a9a9a 0 2px, transparent 2px 5px); }
  .grip.dotted { left: 1px; top: 7px; height: 26px; background: repeating-linear-gradient(to bottom, #1b2a90 0 3px, transparent 3px 6px); }
  .btn { width: 36.4px; height: 37px; display: flex; align-items: center; justify-content: center; flex: none; }
  .btn.hi { background: #c5e0f8; }
  .ico { width: 32px; height: 32px; display: block; overflow: visible; }

  .tbrow.two { padding-left: 766px; }
  .g-style { width: 298px; padding-left: 10px; }
  .btn.narrow { width: 34px; }
  .btn.cubebtn { width: 36px; margin-left: 8px; }
  .caret { width: 0; height: 0; margin-left: 5px; border: 5px solid transparent; border-top: 6px solid #111; border-bottom: 0; }
  .g-axes { width: 445px; padding-left: 7px; }
  .g-vis { width: 309px; padding-left: 13px; }
  .g-end { padding-left: 7px; width: 83px; border: none; border-bottom: 2px solid #c8c8c8; }

  .combo { display: flex; align-items: center; box-sizing: border-box; height: 32px; background: #fff; flex: none; }
  .ctext { flex: 1; padding-left: 5px; white-space: nowrap; overflow: hidden; }
  .chev { width: 15px; align-self: stretch; background: #e4e4e4; border: 1px solid #c8c8c8; display: flex; align-items: center; justify-content: center; box-sizing: border-box; }
  .chev svg { width: 14px; height: 14px; }
  .spin { width: 16px; align-self: stretch; background: #f0f0f0; display: flex; flex-direction: column; align-items: center; justify-content: center; gap: 5px; }
  .spin i { width: 0; height: 0; border: 4px solid transparent; }
  .spin .up { border-bottom: 5px solid #777; border-top: 0; }
  .spin .dn { border-top: 5px solid #777; border-bottom: 0; }
  .faces { width: 151px; height: 33px; margin-left: 1px; }
  .meshdef { width: 191px; height: 32px; }
  .meshdef .ctext { padding-left: 8px; }
  .c-module, .c-model, .c-part { height: 34px; border: 2px solid #a8a8a8; border-bottom-color: #bdbdbd; }
  .c-module { width: 151px; margin-left: 7px; }
  .c-model { width: 124px; margin-left: 7px; }
  .c-part { width: 121px; margin-left: 5px; }
  .c-ind { width: 174px; height: 33px; margin-left: 7px; }
  .c-part .chev, .c-part .spin { opacity: .7; }

  .body { flex: 1; display: flex; min-height: 0; }
  .left { width: 400px; flex: none; display: flex; flex-direction: column; background: #fdfdfd; }
  .tabs { display: flex; align-items: flex-end; height: 42px; box-sizing: border-box; padding-top: 10px; border-bottom: 1px solid #d4d4d4; width: 393px; flex: none; }
  .tab { height: 29px; width: 72px; background: #f0f0f0; border: 1px solid #d8d8d8; border-bottom: 0; box-sizing: border-box; display: flex; align-items: center; justify-content: center; }
  .tab.active { height: 33px; width: 60px; background: #fff; justify-content: flex-start; border-left: 0; margin-bottom: -1px; }
  .dbrow { height: 47px; display: flex; align-items: center; flex: none; width: 393px; }
  .dbcombo { width: 257px; height: 32px; border: 2px solid #b4b4b4; border-left: 0; }
  .dbico { width: 18px; height: 24px; flex: none; overflow: hidden; }
  .dbcombo .ctext { padding-left: 4px; }
  .dbtool { display: flex; justify-content: center; flex: none; }
  .d1 { width: 32px; } .d2 { width: 30px; } .d3 { width: 44px; } .d4 { width: 30px; }
  .dbtool .ico { width: 26px; height: 26px; }
  .treebox { flex: 1; min-height: 0; width: 393px; box-sizing: border-box; display: flex;
    border-top: 2px solid #d0d0d0; border-right: 2px solid #cfcfcf; border-left: 1px solid #e0e0e0; }
  .tree { flex: 1; margin: 0; padding: 0; list-style: none; overflow: hidden; }
  .node { height: 26.67px; display: flex; align-items: center; position: relative; padding-left: 40px; }
  .node::before { content: ""; position: absolute; left: 47px; top: 0; bottom: 0; border-left: 2px dotted #cfcfcf; }
  .exp { width: 14px; height: 14px; position: relative; flex: none; z-index: 1; }
  .plus { position: absolute; inset: 0; border: 1px solid #aeb4c4; background: #eef0f6;
    background-image: linear-gradient(#667 0 0), linear-gradient(#667 0 0); background-size: 8px 2px, 2px 8px; background-position: center; background-repeat: no-repeat; }
  .tick { position: absolute; left: 8px; top: 6px; width: 7px; border-top: 2px dotted #cfcfcf; }
  .tico { width: 27px; height: 27px; margin-left: 3px; flex: none; overflow: visible; }
  .lbl { margin-left: 4px; white-space: nowrap; }
  .node.top { padding-left: 3px; }
  .node.top::before { display: none; }
  .node.top .lbl { margin-left: 9px; }
  .scroll { width: 22px; flex: none; display: flex; flex-direction: column; background: #f1f1f1; }
  .cap { height: 81px; display: flex; justify-content: center; padding-top: 6px; box-sizing: border-box; flex: none; }
  .cap.end { flex: 1; height: auto; align-items: flex-end; padding: 0 0 4px; }
  .cap svg { width: 14px; height: 14px; }
  .thumb { height: 488px; background: #cbcbcb; flex: none; }

  .right { flex: 1; min-width: 0; display: flex; flex-direction: column; }
  .modbar { height: 46px; flex: none; display: flex; align-items: center; padding-left: 12px; box-sizing: border-box; background: linear-gradient(to bottom, #fbfbfb, #f0f0f0); }
  .lab { white-space: nowrap; }
  .m1 { margin-left: 17px; }
  .m2 { margin-left: 18px; }
  .radio { width: 20px; height: 20px; border-radius: 50%; border: 1.500px solid #666; background: #fff; box-sizing: border-box; flex: none; margin: 0 4px 0 6px; position: relative; }
  .radio.on { margin-left: 5px; }
  .radio.on::after { content: ""; position: absolute; inset: 3px; border-radius: 50%; background: #333; }

  .center { flex: 1; min-height: 0; display: flex; }
  .toolbox { width: 94px; flex: none; padding-left: 4px; box-sizing: border-box; background: #f4f4f4; }
  .tgroup { display: grid; grid-template-columns: 38px 38px; grid-auto-rows: 40px; padding: 7px 0 0 2px; width: 86px; box-sizing: border-box; border-bottom: 1px solid #c8c8c8; }
  .tgroup:first-child { padding-top: 3px; }
  .tgroup:nth-child(5) { padding-top: 9px; }
  .tgroup:nth-child(6) { padding-top: 5px; }
  .tgroup:last-child { border-bottom: 0; padding-top: 10px; }
  .tcell { display: flex; align-items: center; justify-content: center; }
  .tcell.hi { background: #c5e0f8; }
  .viewport { flex: 1; position: relative; min-width: 0; border-top: 2px solid #33404f; box-sizing: border-box;
    background: linear-gradient(to bottom, #1a2b45 0%, #1e3049 25%, #2a3c56 50%, #2f4059 60%, #3e4e68 65%, #5b6b84 75%, #7687a0 85%, #9dadc8 100%); margin-right: 4px; }
  .canvas { position: absolute; left: 0; top: -2px; width: 1403px; height: 692px; }
  .tri { font: 700 16px "Liberation Sans", sans-serif; fill: #dfe86a; }
  .tri2 { font: 700 14px "Liberation Sans", sans-serif; fill: #d8d070; }
  .gaxis { font: 700 19px "Liberation Sans", sans-serif; fill: #eef; }
  .zaxis { font: 700 13px "Liberation Sans", sans-serif; fill: #fff; }
  .wm { font: 700 13.500px "Liberation Sans", sans-serif; fill: #ee8a33; }

  .prompt { height: 40px; flex: none; display: flex; align-items: center; padding: 5px 0 0 11px; box-sizing: border-box; background: #fdfdfd; }
  .pbtn { width: 25px; height: 34px; background: #f0f0f0; border: 1px solid #c8c8c8; box-sizing: border-box; display: flex; align-items: center; justify-content: center; margin-right: 6px; flex: none; }
  .pbtn.grey { background: #dcdcdc; }
  .pbtn .ico { width: 22px; height: 22px; }
  .ptext { margin-left: 4px; white-space: nowrap; width: 351px; flex: none; }
  .done { width: 48px; height: 33px; margin-left: 2px; border: 2px solid #1566a8; background: #e8e8e8; box-sizing: border-box; display: flex; align-items: center; justify-content: center; flex: none; }
  .sets { width: 50px; height: 29px; margin-left: 606px; background: #e6e6e6; border: 1px solid #b8b8b8; box-sizing: border-box; display: flex; align-items: center; justify-content: center; flex: none; }
  .simulia { margin-left: 35px; display: flex; align-items: center; color: #1b8095; flex: none; }
  .ds { font: italic 700 17px "Liberation Serif", serif; width: 37px; height: 35px; display: flex; flex-direction: column; align-items: center; line-height: 16px; box-sizing: border-box; }
  .ds em { font-size: 17px; padding-left: 8px; }
  .simtxt { font: italic 400 21px "Liberation Sans", sans-serif; letter-spacing: 2px; width: 110px; white-space: nowrap; display: block; transform: scaleX(1.15); transform-origin: left; }

  .pointer { position: absolute; left: 814px; top: 105px; width: 78px; height: 78px; border-radius: 50%; background: rgba(218, 218, 60, 0.5); }
  .pointer svg { position: absolute; left: 33px; top: 24px; width: 20px; height: 32px; }
</style>
